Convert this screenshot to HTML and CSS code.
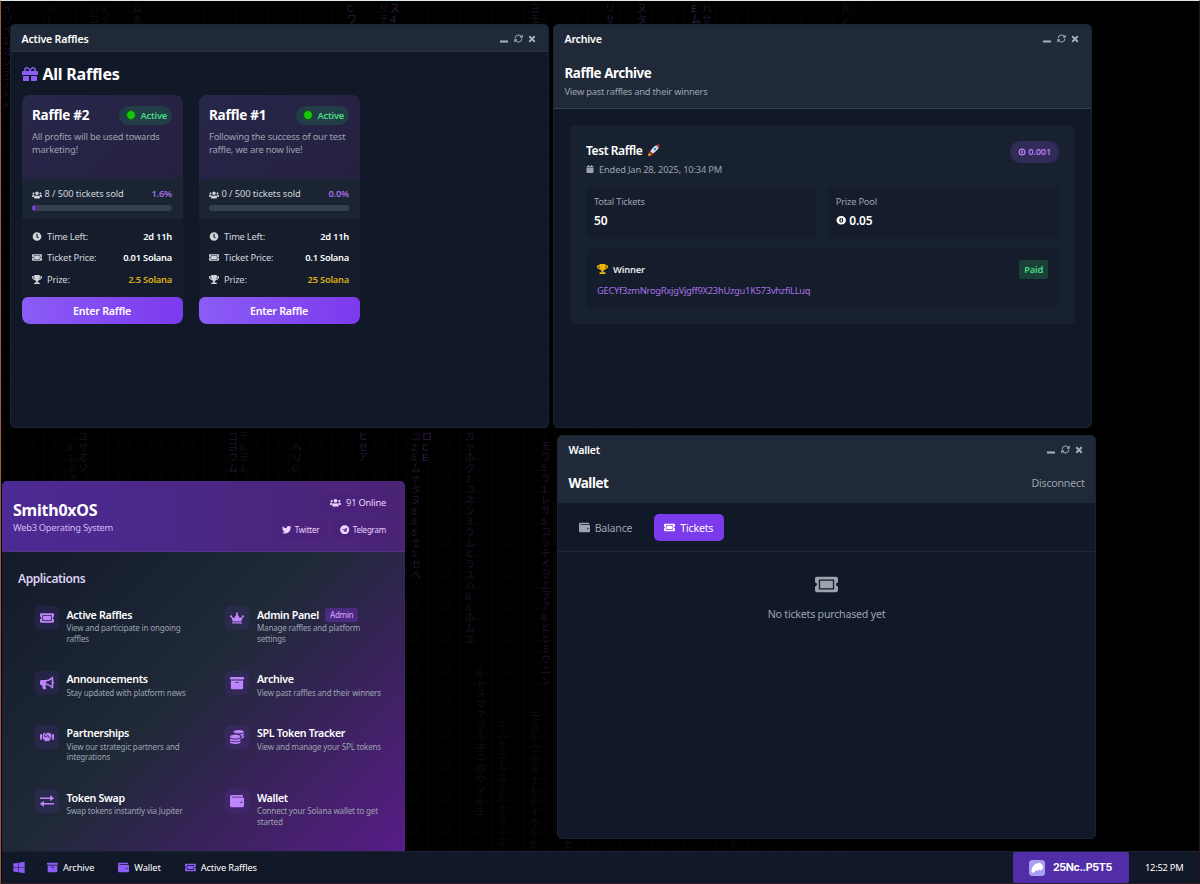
FILE: index.html
```html
<!DOCTYPE html>
<html lang="en">
<head>
    <meta charset="UTF-8">
    <meta name="viewport" content="width=device-width, initial-scale=1.0">
    <title>Smith0xOS</title>
    <link rel="stylesheet" href="styles.css">
</head>
<body>
    <!-- Shared icons -->
    <svg class="sprite" xmlns="http://www.w3.org/2000/svg">
        <symbol id="i-ticket" viewBox="0 0 576 512"><path d="M128 160h320v192H128V160zm400 96c0 26.510 21.490 48 48 48v96c0 26.510-21.490 48-48 48H48c-26.510 0-48-21.490-48-48v-96c26.510 0 48-21.490 48-48s-21.490-48-48-48v-96c0-26.510 21.490-48 48-48h480c26.510 0 48 21.490 48 48v96c-26.510 0-48 21.490-48 48zm-48-104c0-13.255-10.745-24-24-24H120c-13.255 0-24 10.745-24 24v208c0 13.255 10.745 24 24 24h336c13.255 0 24-10.745 24-24V152z"/></symbol>
        <symbol id="i-gift" viewBox="0 0 512 512"><path d="M32 448c0 17.700 14.300 32 32 32h160V320H32v128zm256 32h160c17.700 0 32-14.300 32-32V320H288v160zm192-320h-42.100c6.200-12.100 10.100-25.500 10.100-40 0-48.500-39.500-88-88-88-41.600 0-68.500 21.300-103 68.300-34.500-47-61.400-68.300-103-68.300-48.500 0-88 39.500-88 88 0 14.500 3.800 27.900 10.100 40H32c-17.700 0-32 14.300-32 32v80c0 8.800 7.200 16 16 16h480c8.800 0 16-7.200 16-16v-80c0-17.700-14.300-32-32-32zm-326.100 0c-22.100 0-40-17.900-40-40s17.900-40 40-40c19.900 0 34.600 3.300 86.100 80h-86.100zm206.100 0h-86.100c51.400-76.500 65.700-80 86.100-80 22.100 0 40 17.900 40 40s-17.900 40-40 40z"/></symbol>
        <symbol id="i-clock" viewBox="0 0 512 512"><path d="M256,8C119,8,8,119,8,256S119,504,256,504,504,393,504,256,393,8,256,8Zm92.490,313h0l-20,25a16,16,0,0,1-22.490,2.500h0l-67-49.720a40,40,0,0,1-15-31.230V112a16,16,0,0,1,16-16h32a16,16,0,0,1,16,16V256l58,42.500A16,16,0,0,1,348.490,321Z"/></symbol>
        <symbol id="i-trophy" viewBox="0 0 576 512"><path d="M552 64H448V24c0-13.300-10.700-24-24-24H152c-13.300 0-24 10.700-24 24v40H24C10.700 64 0 74.700 0 88v56c0 35.700 22.500 72.400 61.900 100.700 31.500 22.700 69.800 37.100 110 41.700C203.300 338.500 240 360 240 360v72h-48c-35.300 0-64 20.700-64 56v12c0 6.600 5.400 12 12 12h296c6.600 0 12-5.400 12-12v-12c0-35.300-28.700-56-64-56h-48v-72s36.700-21.500 68.100-73.600c40.300-4.600 78.600-19 110-41.700 39.300-28.300 61.900-65 61.900-100.700V88c0-13.300-10.700-24-24-24zM99.300 192.800C74.900 175.200 64 155.600 64 144v-16h64.200c1 32.600 5.800 61.200 12.800 86.200-15.100-5.200-29.200-12.400-41.700-21.400zM512 144c0 16.100-17.700 36.100-35.300 48.800-12.500 9-26.700 16.200-41.800 21.400 7-25 11.800-53.600 12.800-86.200H512v16z"/></symbol>
        <symbol id="i-users" viewBox="0 0 640 512"><path d="M96 224c35.300 0 64-28.700 64-64s-28.700-64-64-64-64 28.700-64 64 28.700 64 64 64zm448 0c35.300 0 64-28.700 64-64s-28.700-64-64-64-64 28.700-64 64 28.700 64 64 64zm32 32h-64c-17.600 0-33.500 7.100-45.100 18.600 40.300 22.100 68.900 62 75.100 109.400h66c17.700 0 32-14.300 32-32v-32c0-35.300-28.700-64-64-64zm-256 0c61.900 0 112-50.100 112-112S381.900 32 320 32 208 82.100 208 144s50.100 112 112 112zm76.800 32h-8.300c-20.800 10-43.900 16-68.500 16s-47.600-6-68.500-16h-8.300C179.600 288 128 339.600 128 403.200V432c0 26.500 21.500 48 48 48h288c26.500 0 48-21.500 48-48v-28.800c0-63.600-51.600-115.200-115.200-115.200zm-223.700-13.400C161.500 263.100 145.600 256 128 256H64c-35.300 0-64 28.700-64 64v32c0 17.700 14.300 32 32 32h65.900c6.300-47.400 34.900-87.300 75.200-109.400z"/></symbol>
        <symbol id="i-crown" viewBox="0 0 640 512"><path d="M528 448H112c-8.800 0-16 7.200-16 16v32c0 8.800 7.200 16 16 16h416c8.800 0 16-7.200 16-16v-32c0-8.800-7.200-16-16-16zm64-320c-26.500 0-48 21.500-48 48 0 7.100 1.600 13.700 4.400 19.800L476 239.200c-15.400 9.200-35.300 4-44.200-11.600L350.300 85C361 76.200 368 63 368 48c0-26.500-21.500-48-48-48s-48 21.500-48 48c0 15 7 28.200 17.700 37l-81.500 142.600c-8.900 15.600-28.900 20.800-44.200 11.600l-72.300-43.400c2.700-6 4.400-12.700 4.400-19.800 0-26.500-21.500-48-48-48S0 149.500 0 176s21.500 48 48 48c2.600 0 5.200-.4 7.700-.8L128 416h384l72.300-192.800c2.500.4 5.100.8 7.700.8 26.500 0 48-21.500 48-48s-21.500-48-48-48z"/></symbol>
        <symbol id="i-horn" viewBox="0 0 576 512"><path d="M576 240c0-23.630-12.950-44.040-32-55.120V32.010C544 23.260 537.020 0 512 0c-7.120 0-14.190 2.380-19.980 7.020l-85.030 68.030C364.280 109.190 310.660 128 256 128H64c-35.350 0-64 28.650-64 64v96c0 35.350 28.650 64 64 64h33.700c-1.390 10.480-2.180 21.140-2.180 32 0 39.770 9.260 77.350 25.560 110.940 5.190 10.690 16.520 17.060 28.400 17.060h74.280c26.050 0 41.690-29.840 25.900-50.560-16.400-21.520-26.150-48.360-26.150-77.440 0-11.110 1.620-21.790 4.410-32H256c54.660 0 108.280 18.810 150.980 52.950l85.030 68.030a32.023 32.023 0 0 0 19.980 7.020c24.920 0 32-22.780 32-32V295.130C563.050 284.040 576 263.630 576 240zm-96 141.420l-33.050-26.440C392.950 311.780 325.120 288 256 288v-96c69.120 0 136.950-23.780 190.950-66.980L480 98.580v282.840z"/></symbol>
        <symbol id="i-archive" viewBox="0 0 512 512"><path d="M32 448c0 17.700 14.300 32 32 32h384c17.700 0 32-14.300 32-32V160H32v288zm160-212c0-6.600 5.400-12 12-12h104c6.600 0 12 5.400 12 12v8c0 6.600-5.400 12-12 12H204c-6.600 0-12-5.400-12-12v-8zM480 32H32C14.300 32 0 46.300 0 64v48c0 8.800 7.200 16 16 16h480c8.800 0 16-7.200 16-16V64c0-17.700-14.300-32-32-32z"/></symbol>
        <symbol id="i-handshake" viewBox="0 0 640 512"><path d="M434.700 64h-85.900c-8 0-15.700 3-21.600 8.400l-98.300 90c-.1.1-.2.3-.3.4-16.600 15.600-16.300 40.500-2.100 56 12.700 13.900 39.400 17.600 56.100 2.700.1-.1.3-.1.4-.2l79.900-73.200c6.500-5.900 16.700-5.500 22.600 1 6 6.500 5.500 16.600-1 22.600l-26.100 23.900L504 313.800c2.900 2.400 5.500 5 7.900 7.700V128l-54.600-54.600c-5.900-6-14.100-9.400-22.600-9.400zM544 128.200v223.900c0 17.700 14.300 32 32 32h64V128.200h-96zm48 223.900c-8.800 0-16-7.200-16-16s7.200-16 16-16 16 7.200 16 16-7.200 16-16 16zM0 384h64c17.700 0 32-14.300 32-32V128.200H0V384zm48-63.900c8.800 0 16 7.200 16 16s-7.200 16-16 16-16-7.200-16-16c0-8.900 7.200-16 16-16zm435.900 18.600L334.600 217.500l-30 27.500c-29.700 27.100-75.200 24.500-101.700-4.400-26.900-29.400-24.800-74.900 4.400-101.700L289.100 64h-83.800c-8.500 0-16.600 3.400-22.600 9.400L128 128v223.900h18.300l90.500 81.900c27.400 22.300 67.700 18.100 90-9.300l.2-.2 17.900 15.500c15.900 13 39.400 10.500 52.300-5.400l31.400-38.600 5.400 4.400c13.700 11.100 33.900 9.100 45-4.700l9.500-11.700c11.200-13.800 9.100-33.900-4.600-45.100z"/></symbol>
        <symbol id="i-coins" viewBox="0 0 512 512"><path d="M0 405.300V448c0 35.300 86 64 192 64s192-28.700 192-64v-42.700C342.700 434.400 267.200 448 192 448S41.300 434.400 0 405.300zM320 128c106 0 192-28.700 192-64S426 0 320 0 128 28.700 128 64s86 64 192 64zM0 300.400V352c0 35.300 86 64 192 64s192-28.700 192-64v-51.600c-41.300 34-116.900 51.600-192 51.600S41.300 334.400 0 300.400zm416 11c57.300-11.100 96-31.700 96-55.400v-42.700c-23.200 16.400-57.300 27.600-96 34.500v63.600zM192 160C86 160 0 195.800 0 240s86 80 192 80 192-35.800 192-80-86-80-192-80zm219.300 56.300c60-10.800 100.700-32 100.700-56.300v-42.700c-35.500 25.100-96.500 38.600-160.700 41.800 29.500 14.300 51.200 33.500 60 57.200z"/></symbol>
        <symbol id="i-swap" viewBox="0 0 16 16"><path d="M0 4h11.500V2.100q0-.7.600-.3l3.400 2.500q.6.500 0 1l-3.400 2.500q-.6.400-.6-.3V5.600H0zM16 10.400H4.500V8.500q0-.7-.6-.3L.5 10.700q-.6.500 0 1l3.400 2.500q.6.400.6-.3V12H16z"/></symbol>
        <symbol id="i-wallet" viewBox="0 0 512 512"><path d="M461.200 128H80c-8.840 0-16-7.160-16-16s7.160-16 16-16h384c8.840 0 16-7.160 16-16 0-26.510-21.490-48-48-48H64C28.650 32 0 60.650 0 96v320c0 35.350 28.650 64 64 64h397.200c28.020 0 50.800-21.530 50.800-48V176c0-26.470-22.780-48-50.800-48zM416 336c-17.670 0-32-14.330-32-32s14.330-32 32-32 32 14.330 32 32-14.330 32-32 32z"/></symbol>
        <symbol id="i-twitter" viewBox="0 0 512 512"><path d="M459.370 151.716c.325 4.548.325 9.097.325 13.645 0 138.720-105.583 298.558-298.558 298.558-59.452 0-114.680-17.219-161.137-47.106 8.447.974 16.568 1.299 25.340 1.299 49.055 0 94.213-16.568 130.274-44.832-46.132-.975-84.792-31.188-98.112-72.772 6.498.974 12.995 1.624 19.818 1.624 9.421 0 18.843-1.300 27.614-3.573-48.081-9.747-84.143-51.980-84.143-102.985v-1.299c13.969 7.797 30.214 12.670 47.431 13.319-28.264-18.843-46.781-51.005-46.781-87.391 0-19.492 5.197-37.360 14.294-52.954 51.655 63.675 129.300 105.258 216.365 109.807-1.624-7.797-2.599-15.918-2.599-24.040 0-57.828 46.782-104.934 104.934-104.934 30.213 0 57.502 12.670 76.670 33.137 23.715-4.548 46.456-13.320 66.599-25.340-7.798 24.366-24.366 44.833-46.132 57.827 21.117-2.273 41.584-8.122 60.426-16.243-14.292 20.791-32.161 39.308-52.628 54.253z"/></symbol>
        <symbol id="i-telegram" viewBox="0 0 496 512"><path d="M248 8C111.033 8 0 119.033 0 256s111.033 248 248 248 248-111.033 248-248S384.967 8 248 8zm121.800 169.900l-40.700 191.800c-3 13.600-11.100 16.900-22.400 10.500l-62-45.700-29.900 28.800c-3.300 3.300-6.100 6.100-12.500 6.100l4.400-63.100 114.900-103.800c5-4.400-1.100-6.900-7.700-2.500l-142 89.400-61.200-19.100c-13.300-4.200-13.600-13.300 2.800-19.700l239.100-92.200c11.100-4 20.800 2.700 17.200 19.500z"/></symbol>
        <symbol id="i-windows" viewBox="0 0 448 512"><path d="M0 93.700l183.600-25.300v177.400H0V93.700zm0 324.600l183.600 25.300V268.400H0v149.900zm203.800 28L448 480V268.400H203.800v177.900zm0-380.600v180.100H448V32L203.800 65.700z"/></symbol>
        <symbol id="i-calendar" viewBox="0 0 448 512"><path d="M12 192h424c6.600 0 12 5.400 12 12v260c0 26.500-21.500 48-48 48H48c-26.500 0-48-21.500-48-48V204c0-6.600 5.400-12 12-12zm436-44v-36c0-26.500-21.500-48-48-48h-48V12c0-6.600-5.400-12-12-12h-40c-6.600 0-12 5.400-12 12v52H160V12c0-6.600-5.400-12-12-12h-40c-6.600 0-12 5.400-12 12v52H48C21.500 64 0 85.500 0 112v36c0 6.600 5.400 12 12 12h424c6.600 0 12-5.400 12-12z"/></symbol>
        <symbol id="i-coin" viewBox="0 0 16 16"><path fill-rule="evenodd" d="M8 1.500C4 1.500.8 4.200.8 8S4 14.500 8 14.500s7.200-2.700 7.200-6.500S12 1.500 8 1.500zm0 2.700c2 0 3 1.700 3 3.800s-1 3.800-3 3.800S5 10.100 5 8s1-3.800 3-3.800z"/><path d="M7.200 5.300h1.600v5.400H7.200z"/></symbol>
        <symbol id="i-ring" viewBox="0 0 16 16"><path fill-rule="evenodd" d="M8 1a7 7 0 1 0 0 14A7 7 0 0 0 8 1zm0 2.500a4.500 4.500 0 1 1 0 9 4.500 4.500 0 0 1 0-9z"/><path d="M6.300 5.200h3.400v5.600H6.300z"/></symbol>
        <symbol id="i-min" viewBox="0 0 16 16"><path d="M0 11h16v4H0z"/></symbol>
        <symbol id="i-sync" viewBox="0 0 16 16"><path fill="none" stroke="currentColor" stroke-width="1.8" d="M2 7.500A6 6 0 0 1 13 4.500M14 8.500A6 6 0 0 1 3 11.500"/><path d="M15.500 1v5.500H10zM.5 15V9.500H6z"/></symbol>
        <symbol id="i-close" viewBox="0 0 16 16"><path fill="none" stroke="currentColor" stroke-width="3.6" d="M2.500 2.500l11 11M13.500 2.500l-11 11"/></symbol>
    </svg>

    <!-- Falling characters on the desktop -->
    <div class="rain" id="rain"></div>

    <!-- Active raffles window -->
    <section class="window window-raffles">
        <header class="titlebar">
            <h2>Active Raffles</h2>
            <div class="controls">
                <svg><use href="#i-min"/></svg>
                <svg class="sync"><use href="#i-sync"/></svg>
                <svg><use href="#i-close"/></svg>
            </div>
        </header>
        <div class="raffles">
            <h1><svg><use href="#i-gift"/></svg>All Raffles</h1>
            <div class="cards">
                <article class="card">
                    <div class="card-head">
                        <div class="row">
                            <h3>Raffle #2</h3>
                            <span class="status"><i></i>Active</span>
                        </div>
                        <p>All profits will be used towards<br>marketing!</p>
                    </div>
                    <div class="card-progress">
                        <div class="row">
                            <span class="sold"><svg><use href="#i-users"/></svg>8 / 500 tickets sold</span>
                            <b>1.6%</b>
                        </div>
                        <div class="bar"><div class="fill" style="width: 1.6%"></div></div>
                    </div>
                    <div class="card-info">
                        <div class="row"><span><svg><use href="#i-clock"/></svg>Time Left:</span><b>2d 11h</b></div>
                        <div class="row"><span><svg><use href="#i-ticket"/></svg>Ticket Price:</span><b>0.01 Solana</b></div>
                        <div class="row"><span><svg><use href="#i-trophy"/></svg>Prize:</span><b class="gold">2.5 Solana</b></div>
                    </div>
                    <button>Enter Raffle</button>
                </article>
                <article class="card">
                    <div class="card-head">
                        <div class="row">
                            <h3>Raffle #1</h3>
                            <span class="status"><i></i>Active</span>
                        </div>
                        <p>Following the success of our test<br>raffle, we are now live!</p>
                    </div>
                    <div class="card-progress">
                        <div class="row">
                            <span class="sold"><svg><use href="#i-users"/></svg>0 / 500 tickets sold</span>
                            <b>0.0%</b>
                        </div>
                        <div class="bar"></div>
                    </div>
                    <div class="card-info">
                        <div class="row"><span><svg><use href="#i-clock"/></svg>Time Left:</span><b>2d 11h</b></div>
                        <div class="row"><span><svg><use href="#i-ticket"/></svg>Ticket Price:</span><b>0.1 Solana</b></div>
                        <div class="row"><span><svg><use href="#i-trophy"/></svg>Prize:</span><b class="gold">25 Solana</b></div>
                    </div>
                    <button>Enter Raffle</button>
                </article>
            </div>
        </div>
    </section>

    <!-- Archive window -->
    <section class="window window-archive">
        <header class="titlebar plain">
            <h2>Archive</h2>
            <div class="controls">
                <svg><use href="#i-min"/></svg>
                <svg class="sync"><use href="#i-sync"/></svg>
                <svg><use href="#i-close"/></svg>
            </div>
        </header>
        <div class="archive-head">
            <h1>Raffle Archive</h1>
            <p>View past raffles and their winners</p>
        </div>
        <article class="past">
            <div class="past-top">
                <div>
                    <h3>Test Raffle
                        <svg class="rocket" viewBox="0 0 16 16">
                            <path fill="#f4900c" d="M1 15l1.500-5 4 3.500z"/>
                            <path fill="#dd2e44" d="M3 9l3-3 2.500.5L4.500 11zM7 13l3-3 .3-2.500L5.500 12z"/>
                            <path fill="#d5e3ea" d="M4.500 9.500C6 5 10 1 15 1c0 5-4 9-8.500 10.500z"/>
                            <path fill="#dd2e44" d="M11 2q2-1 4-1 0 2-1 4z"/>
                            <circle fill="#3b88c3" cx="9.800" cy="6.200" r="1.600"/>
                        </svg>
                    </h3>
                    <p class="date"><svg><use href="#i-calendar"/></svg>Ended Jan 28, 2025, 10:34 PM</p>
                </div>
                <span class="price"><svg><use href="#i-ring"/></svg>0.001</span>
            </div>
            <div class="stats">
                <div class="stat"><span>Total Tickets</span><b>50</b></div>
                <div class="stat"><span>Prize Pool</span><b><svg><use href="#i-coin"/></svg>0.05</b></div>
            </div>
            <div class="winner">
                <div class="row">
                    <h4><svg><use href="#i-trophy"/></svg>Winner</h4>
                    <span class="paid">Paid</span>
                </div>
                <p>GECYf3zmNrogRxjgVjgff9X23hUzgu1K573vhzfiLLuq</p>
            </div>
        </article>
    </section>

    <!-- Wallet window -->
    <section class="window window-wallet">
        <header class="titlebar plain">
            <h2>Wallet</h2>
            <div class="controls">
                <svg><use href="#i-min"/></svg>
                <svg class="sync"><use href="#i-sync"/></svg>
                <svg><use href="#i-close"/></svg>
            </div>
        </header>
        <div class="wallet-head">
            <h1>Wallet</h1>
            <a>Disconnect</a>
        </div>
        <nav class="tabs">
            <a><svg><use href="#i-wallet"/></svg>Balance</a>
            <a class="active"><svg><use href="#i-ticket"/></svg>Tickets</a>
        </nav>
        <div class="empty">
            <svg><use href="#i-ticket"/></svg>
            <p>No tickets purchased yet</p>
        </div>
    </section>

    <!-- Start menu -->
    <section class="menu">
        <header class="menu-head">
            <div class="brand">
                <h1>Smith0xOS</h1>
                <p>Web3 Operating System</p>
            </div>
            <div class="social">
                <span class="online"><svg><use href="#i-users"/></svg>91 Online</span>
                <div class="links">
                    <a><svg><use href="#i-twitter"/></svg>Twitter</a>
                    <a><svg><use href="#i-telegram"/></svg>Telegram</a>
                </div>
            </div>
        </header>
        <h2>Applications</h2>
        <div class="apps">
            <a class="app">
                <span class="tile"><svg><use href="#i-ticket"/></svg></span>
                <div><h3>Active Raffles</h3><p>View and participate in ongoing<br>raffles</p></div>
            </a>
            <a class="app">
                <span class="tile"><svg><use href="#i-crown"/></svg></span>
                <div><h3>Admin Panel<em>Admin</em></h3><p>Manage raffles and platform<br>settings</p></div>
            </a>
            <a class="app">
                <span class="tile"><svg><use href="#i-horn"/></svg></span>
                <div><h3>Announcements</h3><p>Stay updated with platform news</p></div>
            </a>
            <a class="app">
                <span class="tile"><svg><use href="#i-archive"/></svg></span>
                <div><h3>Archive</h3><p>View past raffles and their winners</p></div>
            </a>
            <a class="app">
                <span class="tile"><svg><use href="#i-handshake"/></svg></span>
                <div><h3>Partnerships</h3><p>View our strategic partners and<br>integrations</p></div>
            </a>
            <a class="app">
                <span class="tile"><svg><use href="#i-coins"/></svg></span>
                <div><h3>SPL Token Tracker</h3><p>View and manage your SPL tokens</p></div>
            </a>
            <a class="app">
                <span class="tile"><svg><use href="#i-swap"/></svg></span>
                <div><h3>Token Swap</h3><p>Swap tokens instantly via Jupiter</p></div>
            </a>
            <a class="app">
                <span class="tile"><svg><use href="#i-wallet"/></svg></span>
                <div><h3>Wallet</h3><p>Connect your Solana wallet to get<br>started</p></div>
            </a>
        </div>
    </section>

    <!-- Taskbar -->
    <footer class="taskbar">
        <svg class="start"><use href="#i-windows"/></svg>
        <a><svg><use href="#i-archive"/></svg>Archive</a>
        <a><svg><use href="#i-wallet"/></svg>Wallet</a>
        <a><svg><use href="#i-ticket"/></svg>Active Raffles</a>
        <button class="account">
            <svg viewBox="0 0 16 16">
                <rect width="16" height="16" rx="3.500" fill="#ab9ff2"/>
                <path fill="#fff" d="M2.500 11.500C2.500 7 6 3 10 3c2.600 0 4 1.700 4 4 0 2-1.200 3.300-2.600 3.300-.8 0-1.200-.5-1.200-1-.7 1-1.600 1.500-2.400 1.500-.5 0-.9-.3-1-.7-.9 1.600-1.900 2.700-3 2.700-.8 0-1.300-.5-1.300-1.300z"/>
            </svg>
            25Nc..P5T5
        </button>
        <time>12:52 PM</time>
    </footer>

    <script>
        // Each column: x, y of the first character, brightness, characters
        const columns = [
            [2, 4, .5, "イリイ1オソテアAA"],
            [44, 4, .25, "キト"],
            [88, 4, .35, "ハカ"],
            [99, 4, .3, "uイ"],
            [131, 4, .45, "ムキ"],
            [346, 4, .8, "Cワ"],
            [378, 4, .5, "リテ"],
            [389, 4, .9, "ス4"],
            [529, 4, .5, "ヨモ"],
            [604, 4, .6, "リサ"],
            [636, 4, .7, "ヌタ"],
            [690, 4, .9, "Eム"],
            [701, 4, .6, "ハサ"],
            [840, 4, .5, "ルノ"],
            [66, 443, .35, "83ナオ"],
            [77, 432, .5, "ユサオソ"],
            [227, 432, .6, "コヨウム"],
            [238, 432, .4, "チ0デ3"],
            [291, 443, .5, "ヘリC"],
            [357, 432, .7, "ヒセア"],
            [410, 432, .6, "コ25ムナタヌ865エ1セヘ"],
            [421, 432, .9, "ロCE"],
            [464, 432, .5, "カヤホク7コネンミウムヒラスハ03ホムユ"],
            [540, 442, .55, "モワ5ラ1レサ5コッテイヲエヲア0ヒヒミウニン"],
            [475, 668, .35, "0トスマアヲミホニロウソ0エ"],
            [496, 720, .25, "キハヤホカコミ7ナタノウ"],
            [529, 712, .3, "モス3コハヌナヒ6イウSE"],
            [594, 421, .3, "リ"],
            [629, 421, .3, "ノ"],
            [727, 840, .3, "ミ"],
            [562, 840, .3, "セ"]
        ];
        const rain = document.getElementById("rain");
        columns.forEach(function([x, y, alpha, chars]) {
            const col = document.createElement("div");
            col.className = "drop";
            col.style.left = x + "px";
            col.style.top = y + "px";
            col.style.opacity = alpha;
            [...chars].forEach(function(c) {
                const cell = document.createElement("span");
                cell.textContent = c;
                col.appendChild(cell);
            });
            rain.appendChild(col);
        });
    </script>
</body>
</html>
```
FILE: styles.css
```css
* {
    box-sizing: border-box;
    margin: 0;
    padding: 0;
}

body {
    width: 1200px;
    height: 884px;
    overflow: hidden;
    position: relative;
    background: #000;
    border-top: 1px solid #dfe9e4;
    border-left: 1px solid #9a5a48;
    border-right: 1px solid #2a1414;
    border-bottom: 1px solid #2c1f24;
    font-family: "Noto Sans", "Open Sans", sans-serif;
    font-size: 9.33px;
    letter-spacing: -0.025em;
    color: #fff;
    white-space: nowrap;
}

h1, h2, h3, h4 {
    font-weight: 600;
}

svg {
    fill: currentColor;
    flex: none;
}

.sprite {
    display: none;
}

button {
    border: none;
    font: inherit;
    letter-spacing: inherit;
    color: #fff;
}

.row {
    display: flex;
    justify-content: space-between;
    align-items: center;
}

/* desktop background */
.rain {
    position: absolute;
    inset: 0;
    background-image: linear-gradient(#060506 1px, transparent 1px), linear-gradient(90deg, #060506 1px, transparent 1px);
    background-size: 10.67px 10.67px;
    -webkit-mask-image: linear-gradient(90deg, #000 70%, transparent 75%);
    mask-image: linear-gradient(90deg, #000 70%, transparent 75%);
}

.drop {
    position: absolute;
    display: flex;
    flex-direction: column;
    font-family: "Liberation Mono", "Noto Sans CJK JP", monospace;
    font-size: 10px;
    line-height: 10.67px;
    color: #38204f;
}

/* windows */
.window {
    position: absolute;
    width: 539px;
    height: 404px;
    background: #111827;
    border: 1px solid #1a2433;
    border-radius: 5px;
    overflow: hidden;
}

.window-raffles {
    left: 9px;
    top: 23px;
}

.window-archive {
    left: 552px;
    top: 23px;
}

.window-wallet {
    left: 556px;
    top: 434px;
}

.titlebar {
    height: 27px;
    padding: 1px 12px 0 10.5px;
    display: flex;
    justify-content: space-between;
    align-items: center;
    background: #1f2937;
    border-bottom: 1px solid #273140;
}

.titlebar.plain {
    border-bottom-color: #1f2937;
}

.titlebar h2 {
    font-size: 10.67px;
}

.controls {
    display: flex;
    align-items: center;
    gap: 6.3px;
    color: #aab1bd;
}

.controls svg {
    width: 8px;
    height: 8px;
}

.controls .sync {
    width: 9px;
    height: 9px;
    margin: 0 -1px;
}

/* raffle cards */
.raffles {
    padding: 11.5px 11px 0 10.5px;
}

.raffles h1 {
    display: flex;
    align-items: center;
    gap: 5px;
    height: 21px;
    margin-bottom: 10.5px;
    font-size: 16px;
    font-weight: 700;
}

.raffles h1 svg {
    width: 16px;
    height: 16px;
    color: #8b5cf6;
}

.cards {
    display: flex;
    gap: 16px;
}

.card {
    width: 161px;
    border-radius: 8px;
    overflow: hidden;
    background: #151d2c;
}

.card-head {
    height: 84px;
    padding: 10.5px;
    background: linear-gradient(135deg, #27274a, #252040);
}

.card-head h3 {
    font-size: 13.5px;
    font-weight: 700;
}

.card-head .row {
    height: 19px;
}

.card-head p {
    margin-top: 5px;
    line-height: 13.5px;
    letter-spacing: -0.02em;
    color: #9ca3af;
}

.status {
    display: flex;
    align-items: center;
    height: 19px;
    padding: 0 5px 0 7px;
    gap: 4px;
    border-radius: 10px;
    background: #213d48;
    color: #4ade80;
    font-weight: 600;
}

.status i {
    width: 10px;
    height: 10px;
    border-radius: 50%;
    border: 1px solid #0b5a12;
    background: #16c60c;
}

.card-progress {
    height: 39.5px;
    padding: 8px 10.5px;
    background: #1a2432;
    color: #d1d5db;
}

.card-progress .row {
    height: 13px;
}

.card-progress b {
    color: #a470e6;
    font-weight: 600;
}

.sold {
    display: flex;
    align-items: center;
    gap: 2.5px;
    letter-spacing: -0.01em;
}

.sold svg {
    width: 10px;
    height: 8px;
    margin-top: 2px;
}

.bar {
    height: 6px;
    margin-top: 5px;
    border-radius: 3px;
    background: #374151;
    overflow: hidden;
}

.fill {
    height: 100%;
    min-width: 3px;
    border-radius: 3px;
    background: #7c3aed;
}

.card-info {
    padding: 10.5px 10.5px 10px;
    height: 78.5px;
    display: flex;
    flex-direction: column;
    gap: 7.5px;
    color: #d1d5db;
}

.card-info .row {
    height: 14px;
}

.card-info span {
    display: flex;
    align-items: center;
    gap: 5px;
}

.card-info svg {
    width: 10px;
    height: 9px;
}

.card-info b {
    color: #fff;
    font-weight: 600;
}

.card-info .gold {
    color: #dcae14;
}

.card button {
    display: block;
    width: 100%;
    height: 27px;
    border-radius: 6px;
    background: linear-gradient(90deg, #8b5cf6, #7c3aed);
    font-size: 10.67px;
    font-weight: 600;
}

/* archive */
.archive-head {
    height: 57px;
    padding: 11.5px 10.5px 0;
    background: #1f2937;
    border-bottom: 1px solid #374151;
}

.archive-head h1, .wallet-head h1 {
    font-size: 13.33px;
    line-height: 19px;
    font-weight: 700;
    letter-spacing: -0.03em;
}

.archive-head p {
    line-height: 18px;
    color: #9ca3af;
}

.past {
    margin: 16px;
    height: 199px;
    padding: 15.5px 16px;
    border-radius: 5px;
    background: #18212f;
}

.past-top {
    display: flex;
    justify-content: space-between;
    height: 46px;
}

.past h3 {
    display: flex;
    align-items: center;
    gap: 5px;
    height: 20px;
    font-size: 12px;
    letter-spacing: -0.035em;
}

.rocket {
    width: 13px;
    height: 13px;
}

.date {
    display: flex;
    align-items: center;
    gap: 5px;
    height: 17px;
    letter-spacing: -0.02em;
    color: #9ca3af;
}

.date svg {
    width: 8px;
    height: 8px;
}

.price {
    display: flex;
    align-items: center;
    gap: 2.5px;
    height: 22px;
    padding: 0 8px;
    border-radius: 11px;
    background: #312b58;
    color: #b57df0;
    font-weight: 600;
}

.price svg {
    width: 8px;
    height: 8px;
}

.stats {
    display: grid;
    grid-template-columns: 1fr 1fr;
    gap: 10.67px;
}

.stat {
    height: 51px;
    padding: 7px 8px;
    border-radius: 5px;
    background: #151c2b;
}

.stat span {
    display: block;
    line-height: 16px;
    color: #9ca3af;
}

.stat b {
    display: flex;
    align-items: center;
    gap: 3px;
    height: 22px;
    font-size: 12px;
    font-weight: 600;
}

.stat svg {
    width: 10.5px;
    height: 10.5px;
}

.winner {
    height: 59px;
    margin-top: 11px;
    padding: 11px;
    border-radius: 5px;
    background: #151c2b;
}

.winner h4 {
    display: flex;
    align-items: center;
    gap: 5px;
    font-size: 9.33px;
    letter-spacing: -0.02em;
    color: #e5e7eb;
}

.winner h4 svg {
    width: 11px;
    height: 10px;
    color: #eab308;
}

.winner p {
    margin-top: 5px;
    line-height: 14px;
    letter-spacing: -0.028em;
    color: #a873e8;
}

.paid {
    height: 19px;
    padding: 0 5px;
    line-height: 19px;
    border-radius: 2.5px;
    background: #1b4038;
    color: #4ade80;
    font-weight: 600;
}

/* wallet */
.wallet-head {
    display: flex;
    justify-content: space-between;
    align-items: center;
    height: 40px;
    padding: 0 10.5px;
    background: #1f2937;
}

.wallet-head a {
    font-size: 10.67px;
    color: #9ca3af;
}

.tabs {
    display: flex;
    gap: 10.67px;
    height: 49px;
    padding: 11px 10px;
    border-bottom: 1px solid #1f2937;
}

.tabs a {
    display: flex;
    align-items: center;
    gap: 5px;
    height: 27px;
    padding: 0 10.67px;
    border-radius: 5px;
    font-size: 10.67px;
    color: #9ca3af;
}

.tabs .active {
    background: #7c3aed;
    color: #fff;
}

.tabs svg {
    width: 11px;
    height: 11px;
}

.empty {
    display: flex;
    flex-direction: column;
    align-items: center;
    padding-top: 21px;
    font-size: 10.67px;
    color: #9ca3af;
}

.empty svg {
    width: 23px;
    height: 23px;
    margin-bottom: 11px;
}

/* start menu */
.menu {
    position: absolute;
    left: 1px;
    top: 480px;
    width: 403px;
    height: 371px;
    border-radius: 5px 5px 0 0;
    background: linear-gradient(135deg, #111827, #1f2937 50%, #581c87);
    overflow: hidden;
}

.menu-head {
    display: flex;
    justify-content: space-between;
    height: 71px;
    padding: 11px;
    background: linear-gradient(90deg, #4c2a94, #4a2474);
    border-bottom: 1px solid #4f3585;
}

.brand {
    padding-top: 7px;
}

.brand h1 {
    font-size: 16px;
    line-height: 22px;
    font-weight: 700;
}

.brand p {
    line-height: 13px;
    letter-spacing: -0.03em;
    color: #cfbdf3;
}

.social {
    display: flex;
    flex-direction: column;
    align-items: flex-end;
    gap: 5px;
}

.social a, .online {
    display: flex;
    align-items: center;
    gap: 3px;
    height: 21px;
    padding: 0 8px;
    border-radius: 5px;
    background: #4c1d7a55;
    color: #e9d5ff;
    font-size: 8px;
}

.social .online {
    gap: 5px;
    height: 25px;
    font-size: 9.33px;
}

.social svg {
    width: 9.5px;
    height: 9.5px;
}

.social .online svg {
    width: 11px;
}

.links {
    display: flex;
    gap: 5px;
    padding-top: 1px;
}

.menu h2 {
    padding: 18px 16px 0;
    line-height: 18px;
    font-size: 12px;
    letter-spacing: -0.035em;
    color: #ddd0f5;
}

.apps {
    display: grid;
    grid-template-columns: 190.5px 190.5px;
    grid-template-rows: 64.5px 54px 64.5px 54px;
    padding: 18px 0 0 32.5px;
}

.app {
    display: flex;
    gap: 8px;
}

.tile {
    display: flex;
    align-items: center;
    justify-content: center;
    width: 24px;
    height: 24px;
    border-radius: 5px;
    background: #7c3aed1f;
    color: #c084fc;
}

.tile svg {
    width: 14px;
    height: 14px;
}

.app h3 {
    display: flex;
    align-items: center;
    height: 17px;
    font-size: 10.67px;
    letter-spacing: -0.03em;
}

.app p {
    font-size: 8px;
    line-height: 10.67px;
    letter-spacing: -0.02em;
    color: #9ca3af;
}

.app em {
    margin-left: 6px;
    padding: 0 5px;
    line-height: 14px;
    border-radius: 3px;
    background: #4b2a82;
    color: #c99bf5;
    font-size: 8px;
    font-style: normal;
    font-weight: 500;
}

/* taskbar */
.taskbar {
    position: absolute;
    left: 1px;
    right: 0;
    bottom: 0;
    height: 32px;
    padding-left: 11px;
    display: flex;
    align-items: center;
    background: #111827;
    border-top: 1px solid #1a2333;
}

.taskbar a {
    display: flex;
    align-items: center;
    gap: 5px;
    margin-right: 24px;
    letter-spacing: -0.015em;
}

.taskbar > svg, .taskbar a svg {
    width: 11px;
    height: 11px;
    color: #8b5cf6;
}

.taskbar .start {
    width: 12px;
    height: 13px;
    margin-right: 22px;
}

.account {
    display: flex;
    align-items: center;
    gap: 8px;
    width: 116px;
    height: 31px;
    margin-left: auto;
    padding-left: 16px;
    border-radius: 2px;
    background: #512da8;
    font-family: Inter, sans-serif;
    font-size: 10.67px;
    font-weight: 700;
    letter-spacing: -0.035em;
}

.account svg {
    width: 16px;
    height: 16px;
}

.taskbar time {
    width: 70px;
    padding-left: 16px;
}
```
